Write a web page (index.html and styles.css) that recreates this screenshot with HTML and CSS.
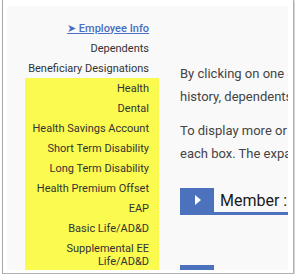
FILE: index.html
```html
<!DOCTYPE html>
<html lang="en">
<head>
  <meta charset="UTF-8" />
  <title>Employee Benefits</title>
  <link rel="stylesheet" href="styles.css">
</head>
<body>
  <div class="frame">
    <div class="panel">
      <nav class="sidebar">
        <a class="nav-item current" href="#">&#10148; Employee Info</a>
        <div class="nav-item">Dependents</div>
        <div class="nav-item">Beneficiary Designations</div>
        <div class="highlight">
          <div class="nav-item">Health</div>
          <div class="nav-item">Dental</div>
          <div class="nav-item">Health Savings Account</div>
          <div class="nav-item">Short Term Disability</div>
          <div class="nav-item">Long Term Disability</div>
          <div class="nav-item">Health Premium Offset</div>
          <div class="nav-item">EAP</div>
          <div class="nav-item">Basic Life/AD&amp;D</div>
          <div class="nav-item">Supplemental EE Life/AD&amp;D</div>
        </div>
      </nav>
      <main class="content">
        <p>By clicking on one of the categories on the left, you can view the coverage<br>history, dependents and beneficiaries for this employee.</p>
        <p>To display more or less detail, click the arrow on the left side of<br>each box. The expanded view shows every coverage change.</p>
        <div class="box-header">
          <span class="toggle"><span class="arrow"></span></span>
          <span class="box-title">Member : Smith, John</span>
        </div>
        <div class="box-header">
          <span class="toggle"><span class="arrow"></span></span>
          <span class="box-title">Coverage</span>
        </div>
      </main>
    </div>
  </div>
</body>
</html>
```

FILE: styles.css
```css
body { margin: 0; background: #fff; font-family: Roboto, "Liberation Sans", sans-serif; }

.frame {
  margin-left: 2px;
  width: 282px;
  padding: 6px 4px 3px 4px;
  border-left: 1px solid #a8a8a8;
  border-right: 1px solid #b0b0b0;
  border-bottom: 1px solid #b0b0b0;
  box-shadow: 1px 1px 2px rgba(0,0,0,0.25);
}
.panel {
  display: flex;
  height: 264px;
  width: 281px;
  background: #f9f9f9;
  overflow: hidden;
}
.sidebar {
  flex: none;
  width: 134px;
  margin-left: 18px;
  padding-top: 12px;
  font-size: 11px;
  color: #333;
  text-align: right;
}
.nav-item {
  display: block;
  padding: 3.5px 10px 3.5px 0;
  line-height: 13px;
}
.nav-item.current {
  color: #4b6fc1;
  font-weight: 500;
  text-decoration: underline;
}
.highlight {
  background: #fafa4f;
  padding-left: 4px;
  height: 200px;
}
.content {
  flex: none;
  width: 560px;
  margin-left: 21px;
  padding-top: 56px;
  font-size: 13px;
  color: #444;
}
.content p {
  margin: 0 0 11px;
  line-height: 23px;
}
.box-header {
  display: flex;
  align-items: center;
  height: 24px;
  margin-top: 23px;
  margin-bottom: 50px;
  border-bottom: 3px solid #4c72bd;
}
.toggle {
  display: flex;
  align-items: center;
  justify-content: center;
  width: 34px;
  height: 24px;
  background: #4c72bd;
}
.arrow {
  width: 0;
  height: 0;
  border-top: 5px solid transparent;
  border-bottom: 5px solid transparent;
  border-left: 6px solid #fff;
  margin-left: 2px;
}
.box-title {
  margin-left: 6px;
  font-size: 16px;
  color: #1a1a1a;
}
.box-header + .box-header { margin-top: 0; }
```
